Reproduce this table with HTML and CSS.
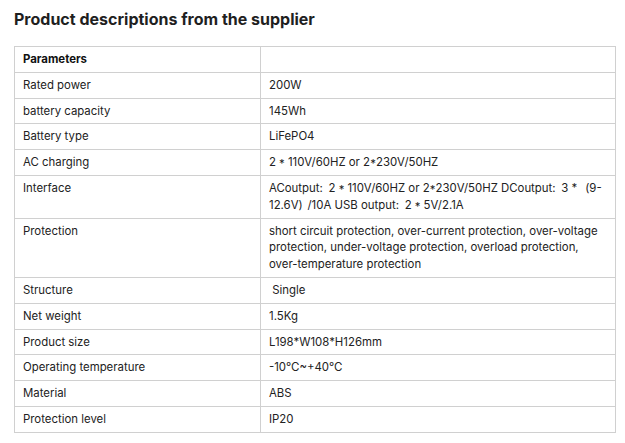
FILE: index.html
```html
<!DOCTYPE html>
<html>
<head>
<meta charset="utf-8">
<link rel="stylesheet" href="styles.css">
</head>
<body>
<div class="page">
  <h2 class="title">Product descriptions from the supplier</h2>
  <table class="specs">
    <tbody>
      <tr><td class="k head">Parameters</td><td class="v"></td></tr>
      <tr><td class="k">Rated power</td><td class="v">200W</td></tr>
      <tr><td class="k">battery capacity</td><td class="v">145Wh</td></tr>
      <tr><td class="k">Battery type</td><td class="v">LiFePO4</td></tr>
      <tr><td class="k">AC charging</td><td class="v">2<span class="ast">*</span>110V/60HZ or 2<span class="ast tight">*</span>230V/50HZ</td></tr>
      <tr><td class="k">Interface</td><td class="v">ACoutput<span class="fw">:</span>2<span class="ast">*</span>110V/60HZ or 2<span class="ast tight">*</span>230V/50HZ <span class="nw">DCoutput<span class="fw">:</span>3<span class="ast up">*</span><span class="fw open">(</span>9-</span><wbr>12.6V<span class="fw close">)</span>/10A USB output<span class="fw">:</span>2<span class="ast">*</span>5V/2.1A</td></tr>
      <tr><td class="k">Protection</td><td class="v">short circuit protection, over-current protection, over-voltage protection, under-voltage protection, overload protection, over-temperature protection</td></tr>
      <tr><td class="k">Structure</td><td class="v">&nbsp;Single</td></tr>
      <tr><td class="k">Net weight</td><td class="v">1.5Kg</td></tr>
      <tr><td class="k">Product size</td><td class="v">L198*W108*H126mm</td></tr>
      <tr><td class="k">Operating temperature</td><td class="v">-10℃~+40℃</td></tr>
      <tr><td class="k">Material</td><td class="v">ABS</td></tr>
      <tr><td class="k">Protection level</td><td class="v">IP20</td></tr>
    </tbody>
  </table>
</div>
</body>
</html>
```

FILE: styles.css
```css
html, body {
  margin: 0;
  padding: 0;
  background: #fff;
}
.page {
  padding: 8px 9px 0 14px;
  font-family: Inter, "Noto Sans", "Noto Sans CJK SC", sans-serif;
  color: #222;
}
.title {
  margin: 0 0 16px 0;
  font-size: 16px;
  font-weight: 700;
  line-height: 22px;
  color: #1f1f1f;
}
.specs {
  width: 602px;
  border-collapse: collapse;
  font-size: 11.4px;
  line-height: 16.8px;
}
.specs td {
  border: 1px solid #d0d0d0;
  padding: 4px 8px;
  vertical-align: top;
  color: #222;
}
.specs .k {
  width: 229px;
}
.specs .head {
  font-weight: 700;
  color: #111;
}
.nw {
  white-space: nowrap;
}
.ast {
  display: inline-block;
  width: 12px;
  text-align: center;
  vertical-align: -2px;
  line-height: 1;
}
.ast.tight {
  width: 6px;
}
.ast.up {
  vertical-align: baseline;
  width: 12px;
}
.fw {
  display: inline-block;
  width: 9px;
  text-align: left;
}
.fw.open {
  text-align: right;
}
```
